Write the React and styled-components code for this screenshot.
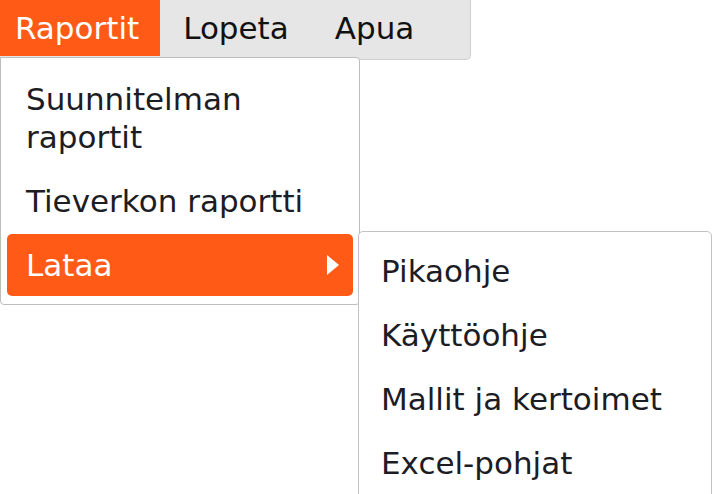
import React from "react";
import styled, { createGlobalStyle } from "styled-components";

const ORANGE = "#ff5a16";

const Global = createGlobalStyle`
  html, body {
    margin: 0;
    padding: 0;
    background: #ffffff;
    overflow: hidden;
  }
  body {
    font-family: "DejaVu Sans", Verdana, sans-serif;
  }
`;

const Page = styled.div`
  width: 716px;
  height: 494px;
  position: relative;
  background: #ffffff;
`;

const MenuBar = styled.nav`
  position: relative;
  display: flex;
  width: 471px;
  height: 60px;
  box-sizing: border-box;
  background: #e6e6e6;
  border-right: 1px solid #cfcfcf;
  border-bottom: 1px solid #cfcfcf;
  border-bottom-right-radius: 5px;
  z-index: 1;
`;

const BarItem = styled.div`
  height: 56px;
  line-height: 57px;
  padding: ${(p) => (p.$first ? "0 21px 0 15px" : "0 23px")};
  font-size: 31px;
  color: ${(p) => (p.$active ? "#ffffff" : "#111111")};
  background: ${(p) => (p.$active ? ORANGE : "transparent")};
`;

const Dropdown = styled.div`
  position: absolute;
  top: 57px;
  left: 0;
  width: 360px;
  box-sizing: border-box;
  background: #ffffff;
  border: 1px solid #bdbdbd;
  border-radius: 0 4px 4px 4px;
  padding: 10px 6px 8px;
  display: flex;
  flex-direction: column;
  gap: 2px;
  z-index: 2;
`;

const Item = styled.div`
  position: relative;
  display: flex;
  align-items: center;
  justify-content: space-between;
  padding: 12px 19px 12px ${(p) => p.$padLeft || "19px"};
  font-size: 31px;
  line-height: 38px;
  border-radius: 5px;
  color: ${(p) => (p.$active ? "#ffffff" : "#1c1c24")};
  background: ${(p) => (p.$active ? ORANGE : "transparent")};
`;

const Arrow = styled.span`
  width: 0;
  height: 0;
  border-left: 12px solid #ffffff;
  border-top: 10px solid transparent;
  border-bottom: 10px solid transparent;
  margin-right: -5px;
`;

const SubMenu = styled.div`
  position: absolute;
  left: calc(100% + 5px);
  top: -3px;
  width: 354px;
  box-sizing: border-box;
  background: #ffffff;
  border: 1px solid #c2c2c2;
  border-radius: 5px;
  padding: 8px 6px;
  display: flex;
  flex-direction: column;
  gap: 2px;
`;

const subItems = ["Pikaohje", "Käyttöohje", "Mallit ja kertoimet", "Excel-pohjat"];

export default function App() {
  return (
    <Page>
      <Global />
      <MenuBar>
        <BarItem $active $first>Raportit</BarItem>
        <BarItem>Lopeta</BarItem>
        <BarItem>Apua</BarItem>
        <Dropdown>
          <Item>Suunnitelman raportit</Item>
          <Item>Tieverkon raportti</Item>
          <Item $active>
            Lataa
            <Arrow />
            <SubMenu>
              {subItems.map((s) => (
                <Item key={s} $padLeft="16px">{s}</Item>
              ))}
            </SubMenu>
          </Item>
        </Dropdown>
      </MenuBar>
    </Page>
  );
}
